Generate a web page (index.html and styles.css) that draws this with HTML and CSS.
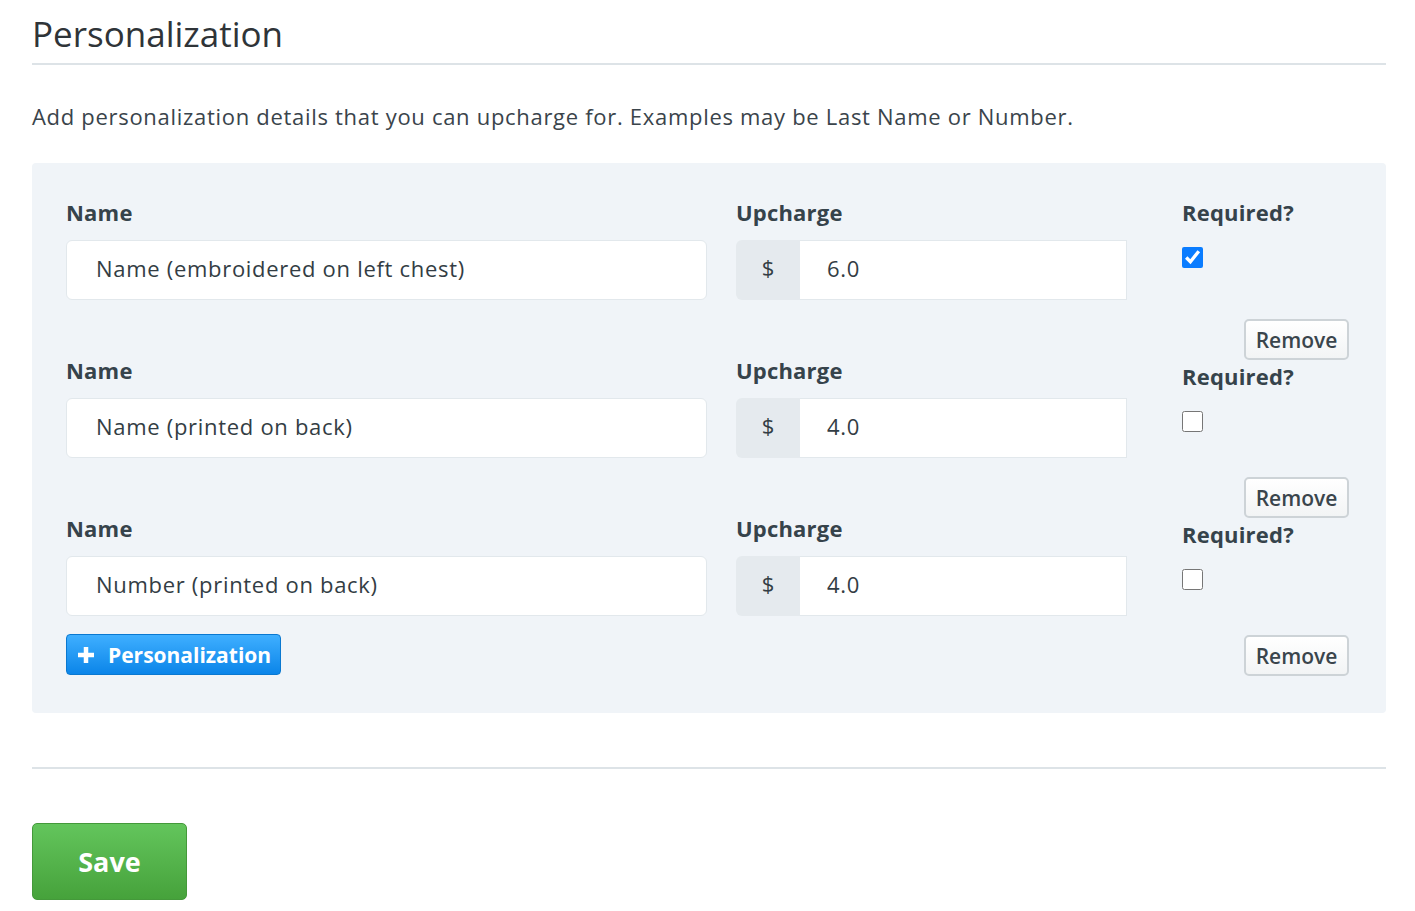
FILE: index.html
```html
<!DOCTYPE html>
<html>
<head>
  <meta charset="UTF-8">
  <title>Personalization</title>
  <link rel="stylesheet" href="styles.css">
</head>
<body>
<div class="page">
  <h2 class="title">Personalization</h2>
  <p class="intro">Add personalization details that you can upcharge for. Examples may be Last Name or Number.</p>

  <div class="panel">
    <div class="row">
      <div class="col-name">
        <label class="lbl">Name</label>
        <input class="field" type="text" value="Name (embroidered on left chest)">
      </div>
      <div class="col-charge">
        <label class="lbl">Upcharge</label>
        <div class="group">
          <span class="addon">$</span>
          <input class="field field-money" type="text" value="6.0">
        </div>
      </div>
      <div class="col-req">
        <label class="lbl">Required?</label>
        <input class="check" type="checkbox" checked>
        <button class="btn-remove">Remove</button>
      </div>
    </div>

    <div class="row">
      <div class="col-name">
        <label class="lbl">Name</label>
        <input class="field" type="text" value="Name (printed on back)">
      </div>
      <div class="col-charge">
        <label class="lbl">Upcharge</label>
        <div class="group">
          <span class="addon">$</span>
          <input class="field field-money" type="text" value="4.0">
        </div>
      </div>
      <div class="col-req">
        <label class="lbl">Required?</label>
        <input class="check" type="checkbox">
        <button class="btn-remove">Remove</button>
      </div>
    </div>

    <div class="row">
      <div class="col-name">
        <label class="lbl">Name</label>
        <input class="field" type="text" value="Number (printed on back)">
        <button class="btn-add"><svg width="18" height="18" viewBox="0 0 18 18"><path d="M9 1v16M1 9h16" stroke="#fff" stroke-width="4.5"/></svg>Personalization</button>
      </div>
      <div class="col-charge">
        <label class="lbl">Upcharge</label>
        <div class="group">
          <span class="addon">$</span>
          <input class="field field-money" type="text" value="4.0">
        </div>
      </div>
      <div class="col-req">
        <label class="lbl">Required?</label>
        <input class="check" type="checkbox">
        <button class="btn-remove">Remove</button>
      </div>
    </div>
  </div>

  <hr class="sep">
  <button class="btn-save">Save</button>
</div>
</body>
</html>
```

FILE: styles.css
```css
*{margin:0;padding:0;box-sizing:border-box;}
body{font-family:"Open Sans","Liberation Sans",sans-serif;color:#3a444b;background:#fff;}
.page{padding:0 29px 0 32px;}

.title{font-size:35px;font-weight:400;color:#2f3438;line-height:44px;padding-top:12px;padding-bottom:7px;border-bottom:2px solid #dde3e7;}
.intro{font-size:22px;letter-spacing:0.7px;line-height:28px;margin-top:37px;color:#3a444b;}

.panel{margin-top:33px;background:#f0f4f8;border-radius:4px;padding:36px 37px 37px 34px;}
.row{display:grid;grid-template-columns:641px 391px 1fr;column-gap:29px;height:158px;}
.row:last-child{height:161px;}
.col-req{margin-left:26px;display:flex;flex-direction:column;align-items:flex-start;height:161px;}
.row + .row .col-req{padding-top:6px;}

.lbl{display:block;font-size:22px;letter-spacing:0.2px;font-weight:700;line-height:26px;color:#36434b;}
.field{display:block;width:100%;height:60px;margin-top:15px;border:1px solid #e2e8ec;border-radius:6px;background:#fff;font-family:inherit;font-size:22px;letter-spacing:0.7px;color:#333d44;padding:0 29px 4px;outline:none;}

.group{display:flex;margin-top:15px;height:60px;}
.addon{width:64px;flex:none;background:#e5eaee;border-radius:6px 0 0 6px;font-size:22px;line-height:54px;text-align:center;color:#333d44;}
.field-money{margin-top:0;border-radius:0;border-left:none;padding-left:27px;}

.check{width:21px;height:21px;margin-top:22px;accent-color:#0a7cff;}
.btn-remove{margin-top:auto;align-self:flex-end;width:105px;height:41px;border:2px solid #cdd3d7;border-radius:5px;background:linear-gradient(#ffffff,#f2f4f5);font-family:inherit;font-size:21px;font-weight:600;color:#3a454c;cursor:pointer;}

.btn-add{display:flex;align-items:center;gap:13px;margin-top:18px;height:41px;padding:0 9px 0 10px;border:1px solid #0a78d0;border-radius:4px;background:linear-gradient(#3fafff,#0b85e9);color:#fff;font-family:inherit;font-size:21px;font-weight:700;cursor:pointer;}

.sep{border:none;border-top:2px solid #dde3e7;margin-top:54px;}
.btn-save{margin-top:54px;width:155px;height:77px;border:1px solid #44993a;border-radius:5px;background:linear-gradient(#63c55c,#46a23b);color:#fff;font-family:inherit;font-size:27px;font-weight:700;cursor:pointer;}
```
